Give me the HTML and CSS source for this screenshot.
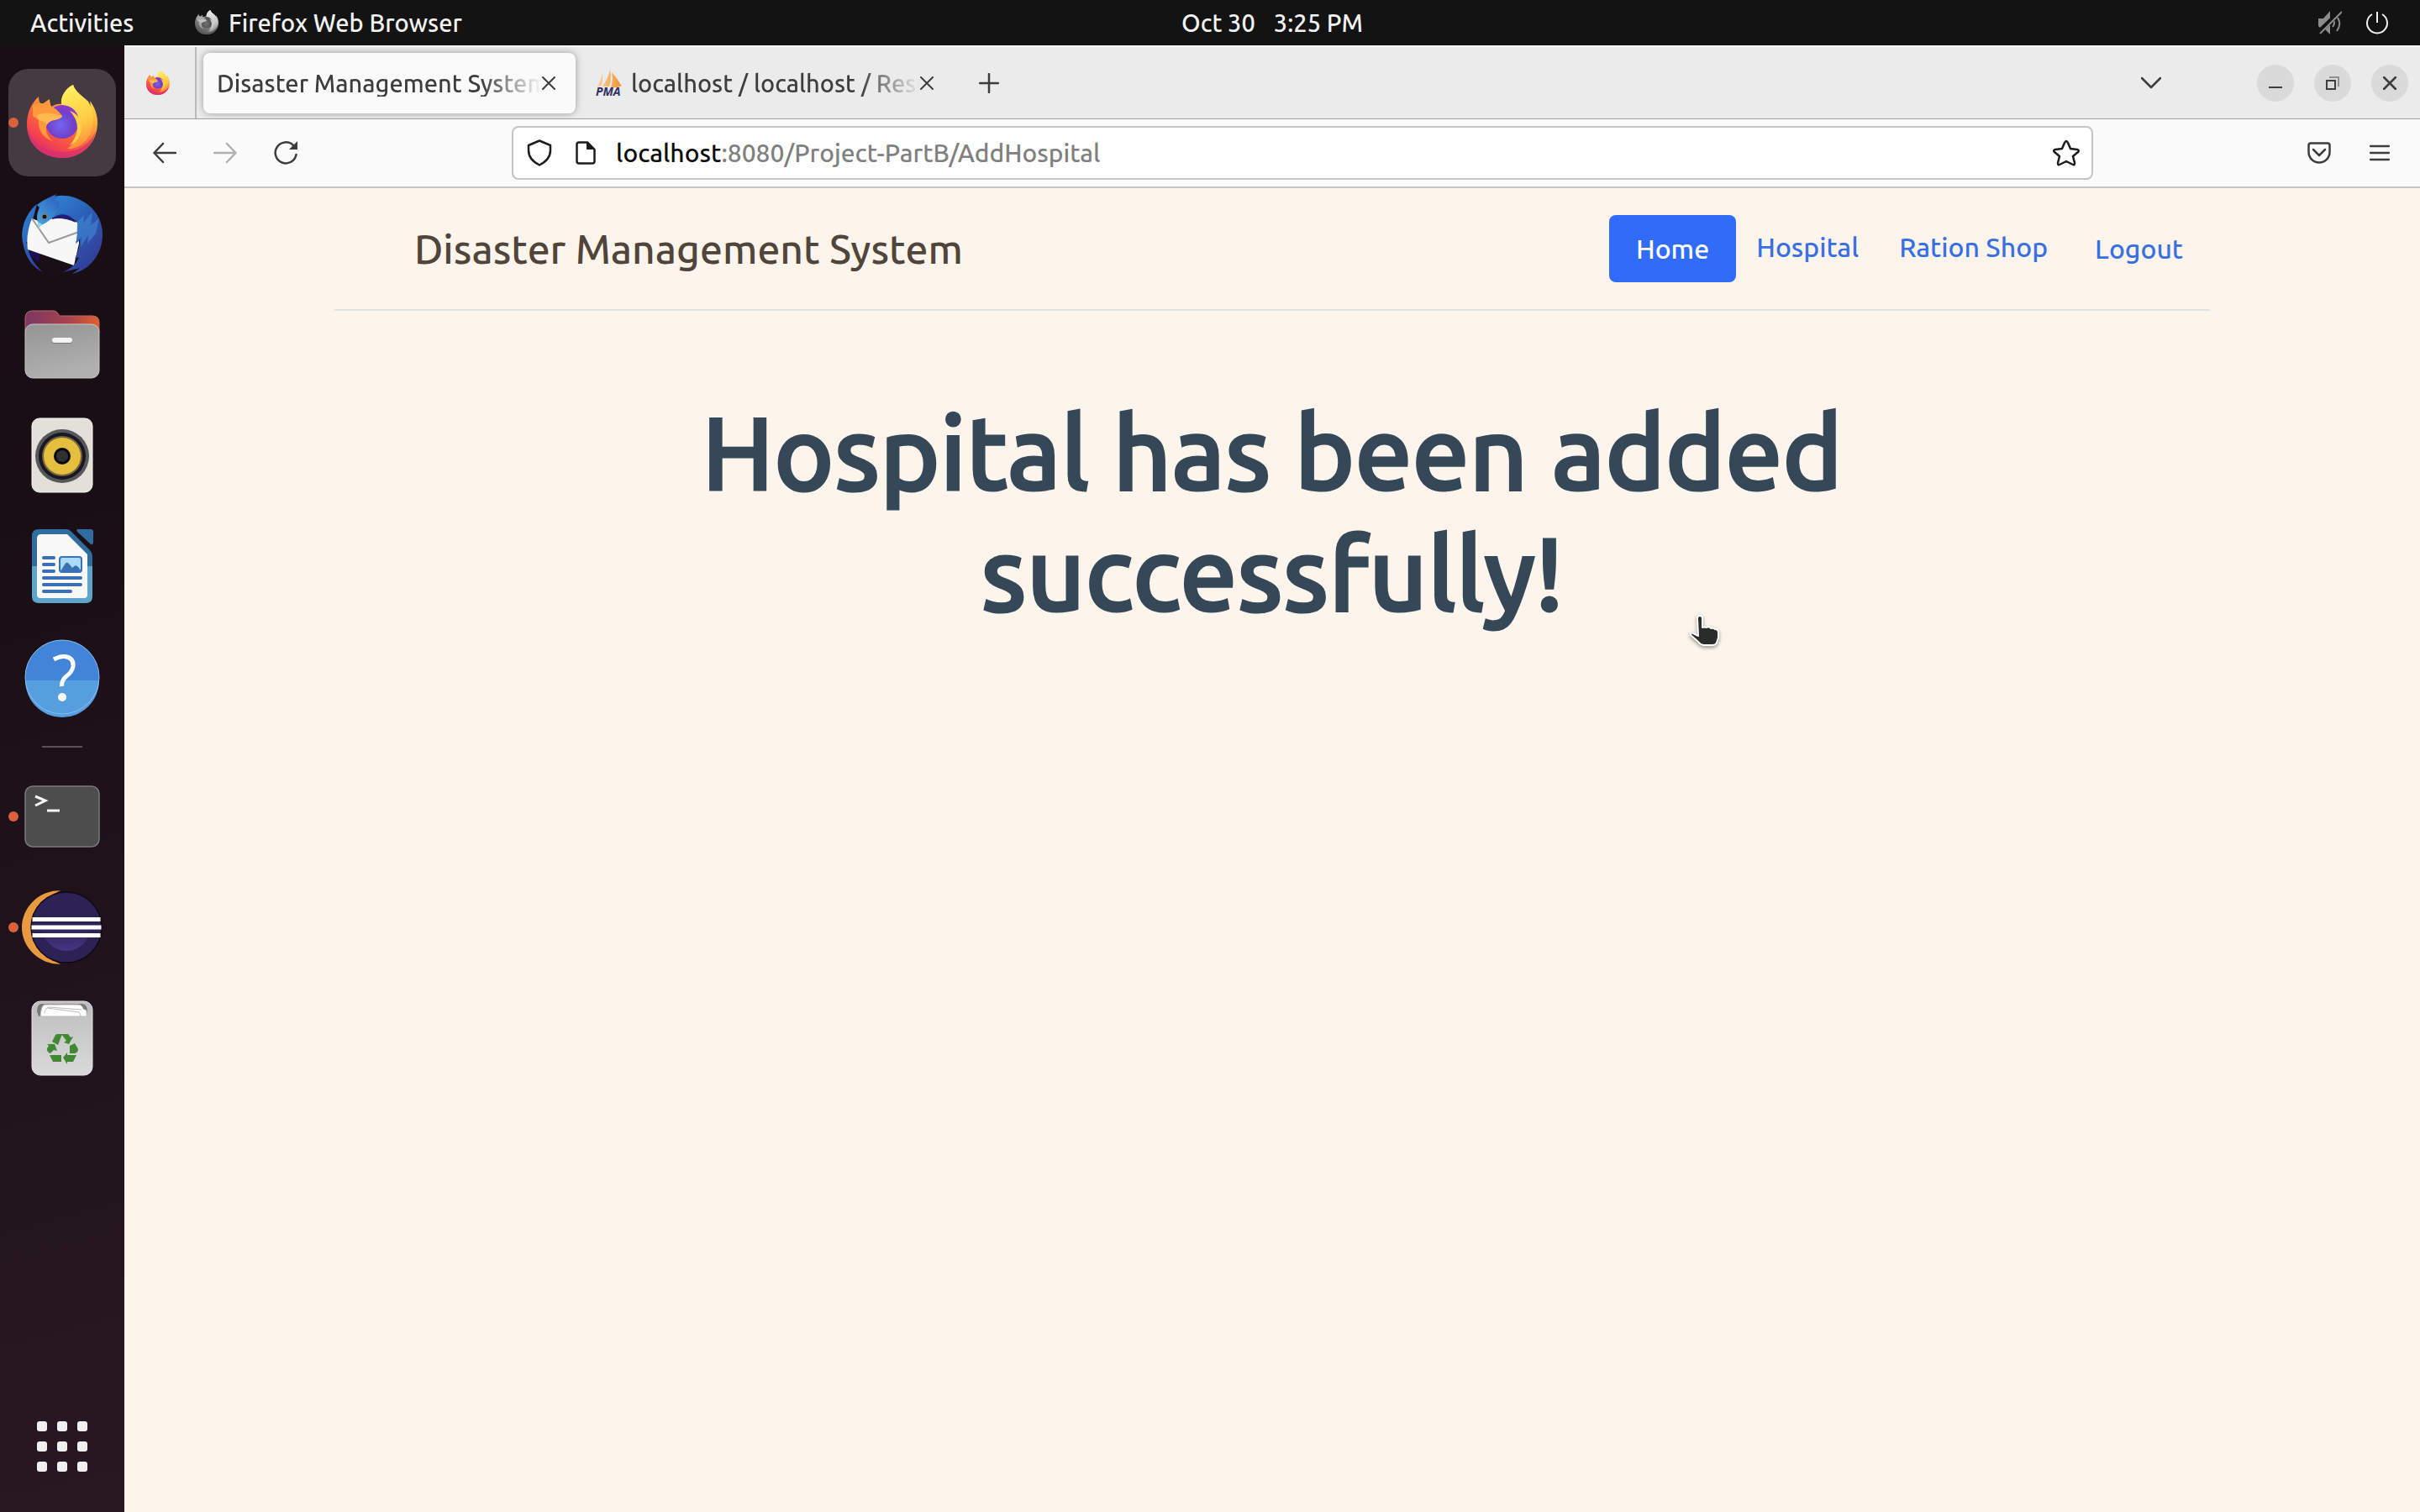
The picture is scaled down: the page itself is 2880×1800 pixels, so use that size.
FILE: index.html
```html
<!DOCTYPE html>
<html lang="en">
<head>
<meta charset="utf-8">
<title>Disaster Management System</title>
<link rel="stylesheet" href="styles.css">
</head>
<body>
<svg class="defs" aria-hidden="true">
  <defs>
    <linearGradient id="fxBody" x1=".85" y1=".05" x2=".3" y2="1"><stop offset="0" stop-color="#ffe84f"/><stop offset=".3" stop-color="#ffb33c"/><stop offset=".58" stop-color="#ff6a3a"/><stop offset=".82" stop-color="#f5434c"/><stop offset="1" stop-color="#d62a78"/></linearGradient>
    <linearGradient id="fxTail" x1=".4" y1="0" x2=".6" y2="1"><stop offset="0" stop-color="#fff05e"/><stop offset=".6" stop-color="#ffcb42"/><stop offset="1" stop-color="#ff8a3c"/></linearGradient>
    <radialGradient id="fxGlobe" cx=".45" cy=".6" r=".65"><stop offset="0" stop-color="#7566f0"/><stop offset=".6" stop-color="#7040c8"/><stop offset="1" stop-color="#9b36cf"/></radialGradient>
    <linearGradient id="tbBody" x1="0" y1="0" x2=".8" y2="1"><stop offset="0" stop-color="#2f8fdc"/><stop offset=".5" stop-color="#2b5fb8"/><stop offset="1" stop-color="#343a94"/></linearGradient>
    <linearGradient id="tbHead" x1=".8" y1="0" x2=".1" y2="1"><stop offset="0" stop-color="#2c62bd"/><stop offset="1" stop-color="#4aa6e2"/></linearGradient>
    <linearGradient id="folder"><stop offset="0" stop-color="#7b3763"/><stop offset=".6" stop-color="#a8434d"/><stop offset="1" stop-color="#e2602f"/></linearGradient>
    <linearGradient id="drawer" x2=".3" y2="1"><stop offset="0" stop-color="#949494"/><stop offset="1" stop-color="#b0b0b0"/></linearGradient>
    <linearGradient id="bin" x2="0" y2="1"><stop offset="0" stop-color="#bdbdbd"/><stop offset="1" stop-color="#dadada"/></linearGradient>
    <linearGradient id="sail"><stop offset="0" stop-color="#fbd3a4"/><stop offset="1" stop-color="#f0932f"/></linearGradient>
    <linearGradient id="moon" x2="0" y2="1"><stop offset="0" stop-color="#2c2255"/><stop offset=".5" stop-color="#2c2255"/><stop offset="1" stop-color="#473585"/></linearGradient>
    <symbol id="firefox" viewBox="0 0 96 96">
      <path fill="url(#fxBody)" d="M6 50C6 38 10 26 20 17C20 21 21 24 23 27C26 25 29 22 33 20C33 23 34 26 35 29C40 26 44 25 47 26C46 17 52 7 61 3C64 12 72 16 79 23C80 25 81 28 82 29L81 22C87 30 90 39 90 48C90 72 72 90 48 90C24 90 6 74 6 50Z"/>
      <path fill="url(#fxTail)" d="M47 26C46 17 52 7 61 3C64 12 72 16 79 23C87 34 87 54 79 66C72 76 62 80 54 79C68 70 73 52 60 36Z"/>
      <circle fill="url(#fxGlobe)" cx="48" cy="47" r="20"/>
      <path fill="#ff9a3b" d="M13 28C18 22 28 26 34 28C41 31 46 37 48 40C46 46 36 42 30 50C27 56 30 65 37 70C26 67 19 57 20 45L13 40Z"/>
      <path fill="#ffb950" d="M17 40C27 34 38 38 48 40C46 46 35 43 30 50L27 47C23 46 19 44 17 40Z"/>
      <path fill="#ffcf45" d="M57 34C68 38 74 48 70 60C68 68 63 72 57 75C70 60 68 46 57 34Z"/>
      <path fill="#d72f70" opacity=".75" d="M6 50C9 72 28 84 50 83C66 82 80 76 88 58C84 78 68 90 48 90C25 90 6 74 6 50Z"/>
    </symbol>
    <symbol id="close" viewBox="0 0 16 16"><path d="M1 1L15 15M15 1L1 15" fill="none" stroke="currentColor" stroke-width="2" stroke-linecap="round"/></symbol>
  </defs>
</svg>

<header class="topbar">
  <button class="activities">Activities</button>
  <div class="app-menu"><svg class="app-icon" viewBox="0 0 96 96"><use href="#firefox"/></svg><span>Firefox Web Browser</span></div>
  <time class="clock"><span>Oct 30</span><span>3:25 PM</span></time>
  <div class="status">
    <svg width="28" height="28" viewBox="0 0 28 28"><path fill="#8c8c8c" d="M0 9H6L14 0V28L6 20H2L0 18Z"/><path d="M17 10Q21 14 17 19M21 6Q29 14 22 24" fill="none" stroke="#8c8c8c" stroke-width="2"/><path d="M0 26L27 0" stroke="#131313" stroke-width="6"/><path d="M2 27L28 1" stroke="#8c8c8c" stroke-width="2"/></svg>
    <svg width="28" height="28" viewBox="0 0 28 28"><path d="M8 4A12 12 0 1 0 20 4M14 1V14" fill="none" stroke="#f2f2f2" stroke-width="2"/></svg>
  </div>
</header>

<div class="desktop">
  <nav class="dock" aria-label="Dock">
    <button class="launcher active running" aria-label="Firefox"><svg viewBox="0 0 96 96"><use href="#firefox"/></svg></button>
    <button class="launcher" aria-label="Thunderbird"><svg viewBox="0 0 96 96">
      <path fill="#1c0f52" d="M5 62L62 82L50 86L32 84C18 84 8 76 5 62Z"/>
      <path fill="#190f16" d="M22 72L62 85L50 97L28 97Q18 84 22 72Z"/>
      <path fill="url(#tbBody)" d="M18 13C4 24 -2 44 1 58C4 76 12 88 25 94C14 84 8 74 7 63L5 58L10 59C8 46 10 36 14 28Z"/>
      <path fill="#f7f7f7" d="M12 30L22 34C34 28 55 28 68 36L68 60L62 86L7 67C5 52 8 40 12 30Z"/>
      <path d="M12 30L32 59L68 46" fill="none" stroke="#9a9a9a" stroke-width="2"/>
      <path fill="url(#tbBody)" d="M18 14C30 3 48 0 62 5C84 12 96 30 96 49C96 73 80 92 60 96L69 89L49 94C58 90 65 84 68 76L63 78C67 70 69 62 69 56L64 60C67 49 66 42 66 34C56 27 45 24 34 31Z"/>
      <path fill="#231c7a" d="M36 30C46 22 58 24 64 35C54 30 44 29 36 31Z"/>
      <path fill="url(#tbHead)" d="M18 28C19 14 29 5 42 1L37 5L44 4L38 8C50 9 44 20 38 27C33 33 27 36 22 39L20 42C20 38 18 34 18 28Z"/>
      <path fill="#9fd4ee" d="M19 34L24 37L20 43Z"/>
      <circle cx="27" cy="28" r="3" fill="#171410" stroke="#8d8450" stroke-width="1"/>
      <path fill="#4490d6" opacity=".55" d="M66 34L74 26L73 36L84 22L82 38L92 30L88 48L78 60L79 50L70 64L71 52L65 58Z"/>
    </svg></button>
    <button class="launcher" aria-label="Files"><svg viewBox="0 0 96 96">
      <path fill="url(#folder)" stroke="#b56a6a" d="M4 32V17Q4 8 13 8H38Q40 8 42 10L45 14H84Q92 14 92 22V34Z"/>
      <rect x="4" y="24" width="88" height="64" rx="9" fill="url(#drawer)" stroke="#c8c8c8" stroke-width="1"/>
      <rect x="36" y="41" width="24" height="6" rx="3" fill="#777"/><rect x="36" y="40" width="24" height="6" rx="3" fill="#f4f4f4"/>
    </svg></button>
    <button class="launcher" aria-label="Rhythmbox"><svg viewBox="0 0 96 96">
      <rect x="12" y="4" width="72" height="88" rx="9" fill="#e2e0d8" stroke="#f6f5f0"/>
      <circle cx="48" cy="49" r="32" fill="#57575a"/><circle cx="48" cy="49" r="28" fill="#171824"/><circle cx="48" cy="49" r="24" fill="#77653a"/><circle cx="48" cy="49" r="22" fill="#e6bf3f"/><circle cx="48" cy="49" r="10" fill="#060606"/><circle cx="48" cy="49" r="7" fill="#303030"/>
    </svg></button>
    <button class="launcher" aria-label="LibreOffice Writer"><svg viewBox="0 0 96 96">
      <path fill="#2f6c9f" d="M20 4H53Q56 4 58 6L81 29Q84 32 84 36V48H12V12Q12 4 20 4Z"/><path fill="#5ea4cb" d="M12 48H84V84Q84 92 76 92H20Q12 92 12 84Z"/>
      <path fill="#2f6c9f" d="M66 4H82Q85 4 85 7V20Q84 24 81 21L67 8Q64 5 66 4Z"/>
      <path fill="#f8f8f8" d="M23 10H54L78 34V82Q78 86 74 86H22Q18 86 18 82V15Q18 10 23 10Z"/>
      <path d="M26 38H38M26 46H38M26 54H38M26 62H70M26 70H70M26 78H58" stroke="#3971b2" stroke-width="4" stroke-linecap="round"/>
      <rect x="45" y="37" width="26" height="18" rx="3" fill="#a9dcf8" stroke="#3971b2" stroke-width="2"/><path fill="#3971b2" d="M46 54L51 46Q53 42 56 45L60 50Q64 45 67 49L71 54Z"/>
    </svg></button>
    <button class="launcher" aria-label="Help"><svg viewBox="0 0 96 96">
      <circle cx="48" cy="48" r="44" fill="#4184d8"/><path fill="#569fdf" d="M4 52H92A44 44 0 0 1 4 52Z"/><circle cx="48" cy="48" r="44" fill="none" stroke="#8dbcec" stroke-width="1"/>
      <path fill="none" stroke="#fff" stroke-width="5" d="M38 27Q45 23 51 23.500Q62 25 61 35Q60 42 53 47Q47 52 47.500 59"/><circle cx="48" cy="72" r="5" fill="#fff"/>
    </svg></button>
    <hr class="dock-divider">
    <button class="launcher running" aria-label="Terminal"><svg viewBox="0 0 96 96">
      <rect x="4" y="12" width="88" height="72" rx="9" fill="#4d4d4d" stroke="#7a7a7a" stroke-width="1.500"/>
      <path d="M16 24L28 29L16 35" fill="none" stroke="#f6f6f6" stroke-width="3"/><path d="M30 41H45" stroke="#f6f6f6" stroke-width="3"/>
    </svg></button>
    <button class="launcher running" aria-label="Eclipse"><svg viewBox="0 0 96 96">
      <path fill="#e99a3f" d="M46 4A46 44 0 0 0 46 92A46 48 0 0 1 46 4Z"/>
      <circle cx="53" cy="48" r="42" fill="#2c2255" stroke="#0d0918" stroke-width="1.500"/><circle cx="53" cy="47" r="29" fill="url(#moon)"/>
      <path d="M12.500 38.500H93.500M11.500 48H94.500M12.500 57.500H93.500" stroke="#fff" stroke-width="5"/>
    </svg></button>
    <button class="launcher" aria-label="Trash"><svg viewBox="0 0 96 96">
      <rect x="12" y="4" width="72" height="88" rx="10" fill="url(#bin)" stroke="#e4e4e4"/>
      <path fill="#777" d="M23 7H72Q78 8 78 16L76 22H20L18 16Q18 8 23 7Z"/><path fill="#fff" stroke="#bbb" d="M22 22Q23 9 27 8H66Q72 8 73 13L77 15V22Z"/><path d="M27 18Q28 12 32 11L71 14M30 12L68 17Q70 18 70 22" fill="none" stroke="#bbb"/>
      <g fill="#418833"><path d="M36 52L40 44Q41 43 43 43H48L43 56Z"/><path d="M47 43H55L58 47L61 46L56 55L50 53L53 51Z"/><path d="M57 57L63 54L67 61Q67 65 63 66H57Z"/><path d="M54 65V68H65L61 76H54V79L49 71Z"/><path d="M33 68H47V76H37Z"/><path d="M30 55H39L42 63L38 62L34 66Q29 64 30 60L32 57Z"/></g>
    </svg></button>
    <button class="launcher apps" aria-label="Show Applications"><svg viewBox="0 0 96 96"><g fill="#f0f0f0">
      <rect x="18" y="18" width="12" height="12" rx="3"/><rect x="42" y="18" width="12" height="12" rx="3"/><rect x="66" y="18" width="12" height="12" rx="3"/>
      <rect x="18" y="42" width="12" height="12" rx="3"/><rect x="42" y="42" width="12" height="12" rx="3"/><rect x="66" y="42" width="12" height="12" rx="3"/>
      <rect x="18" y="66" width="12" height="12" rx="3"/><rect x="42" y="66" width="12" height="12" rx="3"/><rect x="66" y="66" width="12" height="12" rx="3"/></g></svg></button>
  </nav>

  <section class="browser">
    <div class="tabstrip">
      <button class="pinned" aria-label="Firefox View"><svg width="32" height="32" viewBox="0 0 96 96"><use href="#firefox"/></svg></button>
      <div class="tab selected"><span class="tab-label">Disaster Management System</span><button aria-label="Close tab"><svg width="16" height="16"><use href="#close"/></svg></button></div>
      <div class="tab"><svg class="favicon" width="32" height="32" viewBox="0 0 32 32"><path fill="url(#sail)" d="M8 3Q9 14 6 20L1 21Q7 12 8 3ZM17 0Q19 12 16 20H8Q15 10 17 0ZM19 3Q27 12 29 17L31 19L26 21H18Q21 12 19 3Z"/><text x="0" y="31" class="favicon-text">PMA</text></svg><span class="tab-label">localhost / localhost / Results</span><button aria-label="Close tab"><svg width="16" height="16"><use href="#close"/></svg></button></div>
      <button class="new-tab" aria-label="New tab"><svg width="24" height="24" viewBox="0 0 24 24"><path d="M12 1V23M1 12H23" stroke="currentColor" stroke-width="2.500" stroke-linecap="round"/></svg></button>
      <button class="all-tabs" aria-label="List all tabs"><svg width="24" height="16" viewBox="0 0 24 16"><path d="M1 2L12 13L23 2" fill="none" stroke="currentColor" stroke-width="2.500" stroke-linecap="round" stroke-linejoin="round"/></svg></button>
      <div class="window-controls">
        <button aria-label="Minimize"><svg width="16" height="16"><path d="M0 13H16" stroke="currentColor" stroke-width="2"/></svg></button>
        <button aria-label="Restore"><svg width="16" height="16"><path d="M4 1H15V12" fill="none" stroke="#8f8f8f" stroke-width="2"/><path d="M1 5H11V15H1Z" fill="none" stroke="currentColor" stroke-width="2"/></svg></button>
        <button aria-label="Close"><svg width="16" height="16" viewBox="0 0 16 16"><path d="M1 1L15 15M15 1L1 15" stroke="currentColor" stroke-width="2.500" stroke-linecap="round"/></svg></button>
      </div>
    </div>

    <div class="toolbar">
      <div class="nav-buttons">
        <button aria-label="Back"><svg width="28" height="28" viewBox="0 0 28 28"><path d="M27 14H1.500M12 3L1.500 14L12 25" fill="none" stroke="currentColor" stroke-width="2.500" stroke-linecap="round" stroke-linejoin="round"/></svg></button>
        <button class="dim" aria-label="Forward"><svg width="28" height="28" viewBox="0 0 28 28"><path d="M1 14H26.500M16 3L26.500 14L16 25" fill="none" stroke="currentColor" stroke-width="2.500" stroke-linecap="round" stroke-linejoin="round"/></svg></button>
        <button aria-label="Reload"><svg width="28" height="28" viewBox="0 0 28 28"><path d="M23 5A12.500 12.500 0 1 0 26.500 16" fill="none" stroke="currentColor" stroke-width="2.500" stroke-linecap="round"/><path fill="currentColor" d="M28 0V10H18Z"/></svg></button>
      </div>
      <div class="urlbar">
        <svg width="30" height="32" viewBox="0 0 30 32"><path d="M15 1.500L28 7V13Q28 24 15 30.500Q2 24 2 13V7Z" fill="none" stroke="#1c1c1c" stroke-width="2.500" stroke-linejoin="round"/></svg>
        <svg width="24" height="28" viewBox="0 0 24 28"><path d="M4 1.500H14L22.500 10V24Q22.500 26.500 20 26.500H4Q1.500 26.500 1.500 24V4Q1.500 1.500 4 1.500Z" fill="none" stroke="#1c1c1c" stroke-width="2.500"/><path fill="#1c1c1c" d="M13 1V10H23L15 1Z"/></svg>
        <a class="url" href="#"><span class="host">localhost</span>:8080/Project-PartB/AddHospital</a>
        <button aria-label="Bookmark"><svg width="32" height="32" viewBox="0 0 32 32"><path d="M16 2Q17 2 18 4L21 11L29 12Q32 13 30 15L24 20L26 28Q26 31 24 30L16 26L8 30Q6 31 6 28L8 20L2 15Q0 13 3 12L11 11L14 4Q15 2 16 2Z" fill="none" stroke="#1c1c1c" stroke-width="2.500" stroke-linejoin="round"/></svg></button>
      </div>
      <div class="tools">
        <button aria-label="Pocket"><svg width="28" height="26" viewBox="0 0 28 26"><path d="M4 1.500H24Q26.500 1.500 26.500 4V12A12.500 12.500 0 0 1 1.500 12V4Q1.500 1.500 4 1.500Z" fill="none" stroke="currentColor" stroke-width="2.500"/><path d="M7 9L14 16L21 9" fill="none" stroke="currentColor" stroke-width="2.500" stroke-linecap="round" stroke-linejoin="round"/></svg></button>
        <button aria-label="Menu"><svg width="24" height="20" viewBox="0 0 24 20"><path d="M1 2H23M1 10H23M1 18H23" stroke="currentColor" stroke-width="2.500" stroke-linecap="round"/></svg></button>
      </div>
    </div>

    <main class="page">
      <div class="container">
        <header class="site-header">
          <a class="brand" href="#">Disaster Management System</a>
          <nav class="site-nav">
            <a class="nav-link current" href="#">Home</a>
            <button class="menu-button">Hospital</button>
            <button class="menu-button">Ration Shop</button>
            <a class="nav-link" href="#">Logout</a>
          </nav>
        </header>
        <h1>Hospital has been added successfully!</h1>
      </div>
      <svg class="pointer" width="42" height="44" viewBox="0 0 42 44"><path d="M11 6Q11 3 14 3Q17 3 17 6V17Q20 16 22 17Q25 15 27 18Q30 17 32 19Q36 19 36 23V29L34 35Q33 38 29 38H18Q14 37 12 34L3 26Q2 23 6 24L12 27Z" fill="#2b2b2b" stroke="#fff" stroke-width="2" stroke-linejoin="round"/></svg>
    </main>
  </section>
</div>
</body>
</html>
```
FILE: styles.css
```css
* { box-sizing: border-box; }
body {
  margin: 0;
  min-height: 100vh;
  display: flex;
  flex-direction: column;
  font-family: Ubuntu, "Noto Sans", sans-serif;
  font-size: 30px;
  font-weight: 500;
  color: #3d3d3d;
}
button {
  margin: 0;
  padding: 0;
  border: 0;
  background: none;
  font: inherit;
  color: inherit;
  display: flex;
  align-items: center;
  justify-content: center;
}
a { color: inherit; text-decoration: none; }
svg { display: block; flex: none; }
.defs { position: absolute; width: 0; height: 0; }

.topbar {
  height: 54px;
  display: grid;
  grid-template-columns: 148px 1fr auto 1fr;
  align-items: center;
  background: #131313;
  color: #f2f2f2;
  font-size: 29px;
  white-space: nowrap;
}
.activities { padding-left: 36px; justify-content: flex-start; }
.app-menu { display: flex; align-items: center; gap: 10px; padding-left: 82px; }
.app-icon { width: 32px; height: 32px; filter: grayscale(1); }
.clock { display: flex; gap: 22px; }
.status { display: flex; justify-content: flex-end; gap: 28px; padding-right: 37px; }

.desktop { flex: 1; display: flex; }
.dock {
  width: 148px;
  flex: none;
  display: flex;
  flex-direction: column;
  align-items: center;
  gap: 4px;
  padding: 28px 0 14px;
  background: linear-gradient(165deg, #1a0e15 30%, #22141d 70%, #281821);
}
.launcher { position: relative; width: 128px; height: 128px; border-radius: 24px; }
.launcher svg { width: 96px; height: 96px; }
.launcher.active { background: #453a41; }
.launcher.running::before {
  content: "";
  position: absolute;
  left: 0;
  top: 58px;
  width: 12px;
  height: 12px;
  border-radius: 50%;
  background: #d9623a;
}
.dock-divider { width: 48px; height: 2px; margin: 14px 0; border: 0; background: #5a5156; }
.apps { margin-top: auto; }

.browser { flex: 1; min-width: 0; display: flex; flex-direction: column; }
.tabstrip {
  height: 88px;
  display: flex;
  align-items: center;
  background: #ebebeb;
  border-top: 2px solid #fafafa;
  border-bottom: 1px solid #a0a0a0;
}
.pinned { width: 86px; padding-right: 4px; align-self: stretch; border-right: 2px solid #bababa; margin-right: 8px; }
.tab { width: 443px; height: 72px; display: flex; align-items: center; padding: 0 24px; }
.tab + .tab { width: 450px; }
.tab.selected { padding-left: 16px; border-radius: 8px; background: #fafafa; box-shadow: 0 0 8px #999; }
.tab-label {
  flex: 1;
  overflow: hidden;
  white-space: nowrap;
  font-size: 29px;
  mask-image: linear-gradient(to left, transparent, #000 72px);
}
.favicon { margin-right: 10px; }
.favicon-text { font: italic 700 14px "Open Sans", sans-serif; fill: #2f2f63; }
.new-tab { margin-left: 30px; }
.all-tabs { margin-left: auto; }
.window-controls { display: flex; gap: 24px; margin: 0 14px 0 114px; }
.window-controls button { width: 44px; height: 44px; border-radius: 50%; background: #dadada; }

.toolbar {
  height: 82px;
  display: flex;
  align-items: center;
  padding: 0 36px 0 34px;
  background: #fafafa;
  border-bottom: 2px solid #c4c4c6;
}
.nav-buttons { display: flex; gap: 44px; }
.dim { color: #b0b0b0; }
.urlbar {
  flex: 1;
  height: 64px;
  margin: 0 255px;
  padding: 0 14px 0 16px;
  display: flex;
  align-items: center;
  gap: 28px;
  background: #fff;
  border: 2px solid #c4c4c4;
  border-radius: 8px;
}
.url { flex: 1; margin-left: -4px; color: #808080; }
.host { color: #0c0c0c; }
.tools { display: flex; align-items: center; gap: 46px; }

.page { position: relative; flex: 1; background: #fdf4eb; }
.container { max-width: 2280px; margin: 0 auto; padding: 0 24px; }
.site-header {
  display: flex;
  align-items: center;
  justify-content: space-between;
  padding: 32px 0;
  border-bottom: 2px solid #dee2e6;
  font-size: 32px;
}
.brand { margin-left: 95px; font-size: 48px; line-height: 64px; color: #50453a; }
.site-nav { display: flex; align-items: center; line-height: 48px; color: #386fe3; }
.nav-link { padding: 16px 32px; }
.nav-link.current { background: #306cf7; color: #fff; border-radius: 8px; }
.menu-button { padding: 14px 24px 18px; }
h1 {
  max-width: 1600px;
  margin: 96px auto 0;
  font-size: 121px;
  line-height: 144px;
  font-weight: 500;
  -webkit-text-stroke: 3px #344858;
  text-align: center;
  color: #344858;
}
.pointer { position: absolute; left: 1861px; top: 506px; filter: drop-shadow(0 2px 2px #0006); }
```
